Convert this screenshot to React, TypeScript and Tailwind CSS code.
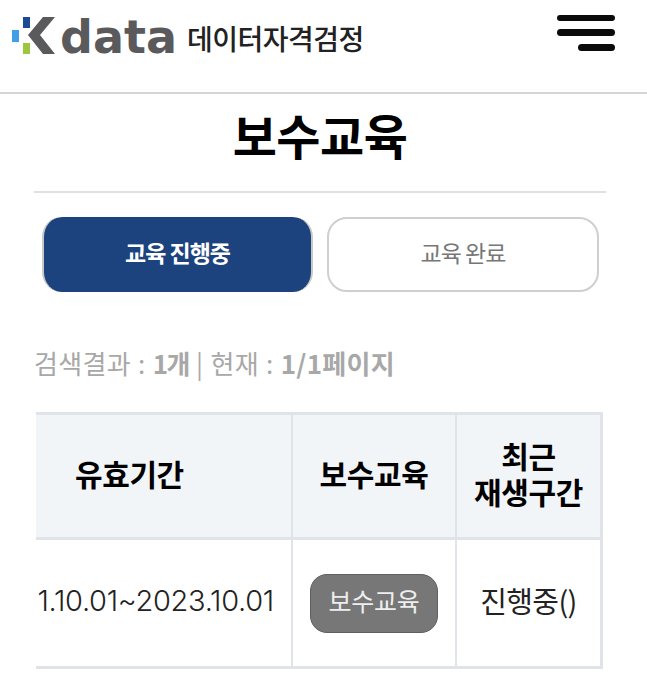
const cjk = "font-['Noto_Sans_CJK_KR','Noto_Sans',sans-serif]"

function Logo() {
  return (
    <div className="flex items-center">
      <svg width="56" height="42" viewBox="0 0 56 42" aria-hidden="true" className="shrink-0">
        <rect x="11" y="15" width="7" height="12" fill="#3f9fe8" />
        <rect x="22" y="2" width="7" height="11" fill="#1d4a97" />
        <rect x="22" y="28" width="7" height="11" fill="#9cc63c" />
        <polygon points="42,2 54,2 39,20 54,39 42,39 27,20" fill="#5a5a5c" />
      </svg>
      <span className="mt-[3px] ml-[3px] font-['DejaVu_Sans',sans-serif] text-[46px] leading-none font-bold text-[#5a5a5c]">
        data
      </span>
      <span className={`${cjk} mt-[4px] ml-[10px] text-[28px] leading-none font-medium tracking-[-0.5px] text-[#222]`}>
        데이터자격검정
      </span>
    </div>
  )
}

function Menu() {
  return (
    <div className="flex flex-col items-end gap-[8px]">
      <span className="h-[6px] w-[58px] rounded-full bg-[#0b0b0b]" />
      <span className="h-[7px] w-[58px] rounded-full bg-[#0b0b0b]" />
      <span className="h-[7px] w-[37px] rounded-full bg-[#0b0b0b]" />
    </div>
  )
}

export default function App() {
  return (
    <div className={`${cjk} h-[690px] w-[647px] overflow-hidden bg-white`}>
      <header className="flex h-[94px] items-start justify-between border-b-2 border-[#d5d5d5] pr-[32px] pl-[1px]">
        <div className="mt-[11px]">
          <Logo />
        </div>
        <div className="mt-[15px]">
          <Menu />
        </div>
      </header>

      <h1 className="mr-[41px] ml-[34px] flex h-[99px] items-center justify-center border-b-2 border-[#e0e0e0] pb-[18px] text-[48px] leading-none font-bold tracking-[-0.5px] text-black">
        보수교육
      </h1>

      <div className="mt-[24px] flex gap-[14px] pr-[48px] pl-[42px]">
        <button className="flex h-[75px] w-[271px] items-center justify-center rounded-[20px] border-x-2 border-[#c9c9c9] bg-[#1c437e] pb-[5px] text-[23px] font-bold tracking-[-1px] text-white">
          교육 진행중
        </button>
        <button className="flex h-[75px] w-[272px] items-center justify-center rounded-[20px] border-2 border-[#cfcfcf] bg-white pb-[5px] text-[23px] tracking-[-1px] text-[#777]">
          교육 완료
        </button>
      </div>

      <p className="mt-[51px] ml-[34px] text-[26px] leading-[40px] tracking-[0.3px] [word-spacing:1px] text-[#a8a8a8]">
        검색결과 : <b className="font-bold tracking-[-1.5px]">1개</b> | 현재 : <b className="font-bold">1/1페이지</b>
      </p>

      <div className="mt-[29px] ml-[36px] w-[567px] overflow-hidden border-t-[3px] border-r-[3px] border-b-[3px] border-[#e0e4e8]">
        <div className="grid h-[125px] grid-cols-[255px_2px_162px_2px_1fr] border-b-[3px] border-[#e0e4e8] bg-[#f2f5f7] text-[30px] leading-[36px] font-bold tracking-[-0.4px] text-black">
          <div className="flex items-center pb-[6px] pl-[39px]">유효기간</div>
          <div className="bg-[#e0e4e8]" />
          <div className="flex items-center justify-center pb-[6px]">보수교육</div>
          <div className="bg-[#e0e4e8]" />
          <div className="flex items-center justify-center pb-[6px] text-center">
            최근
            <br />
            재생구간
          </div>
        </div>
        <div className="grid h-[126px] grid-cols-[255px_2px_162px_2px_1fr] text-[#222]">
          <div className="flex items-center justify-end overflow-hidden pr-[17px] pb-[4px] text-[29px] font-light tracking-[-0.3px] whitespace-nowrap">
            <span className="font-['Inter',sans-serif]">2021.10.01~2023.10.01</span>
          </div>
          <div className="bg-[#e0e4e8]" />
          <div className="flex items-center justify-center">
            <span className="flex h-[59px] w-[128px] items-center justify-center rounded-[17px] border border-[#5f5f5f] bg-[#777] pb-[5px] text-[25px] tracking-[-0.3px] text-[#eee]">
              보수교육
            </span>
          </div>
          <div className="bg-[#e0e4e8]" />
          <div className="flex items-center justify-center pb-[4px] text-[29px] tracking-[-0.6px]">진행중()</div>
        </div>
      </div>
    </div>
  )
}
